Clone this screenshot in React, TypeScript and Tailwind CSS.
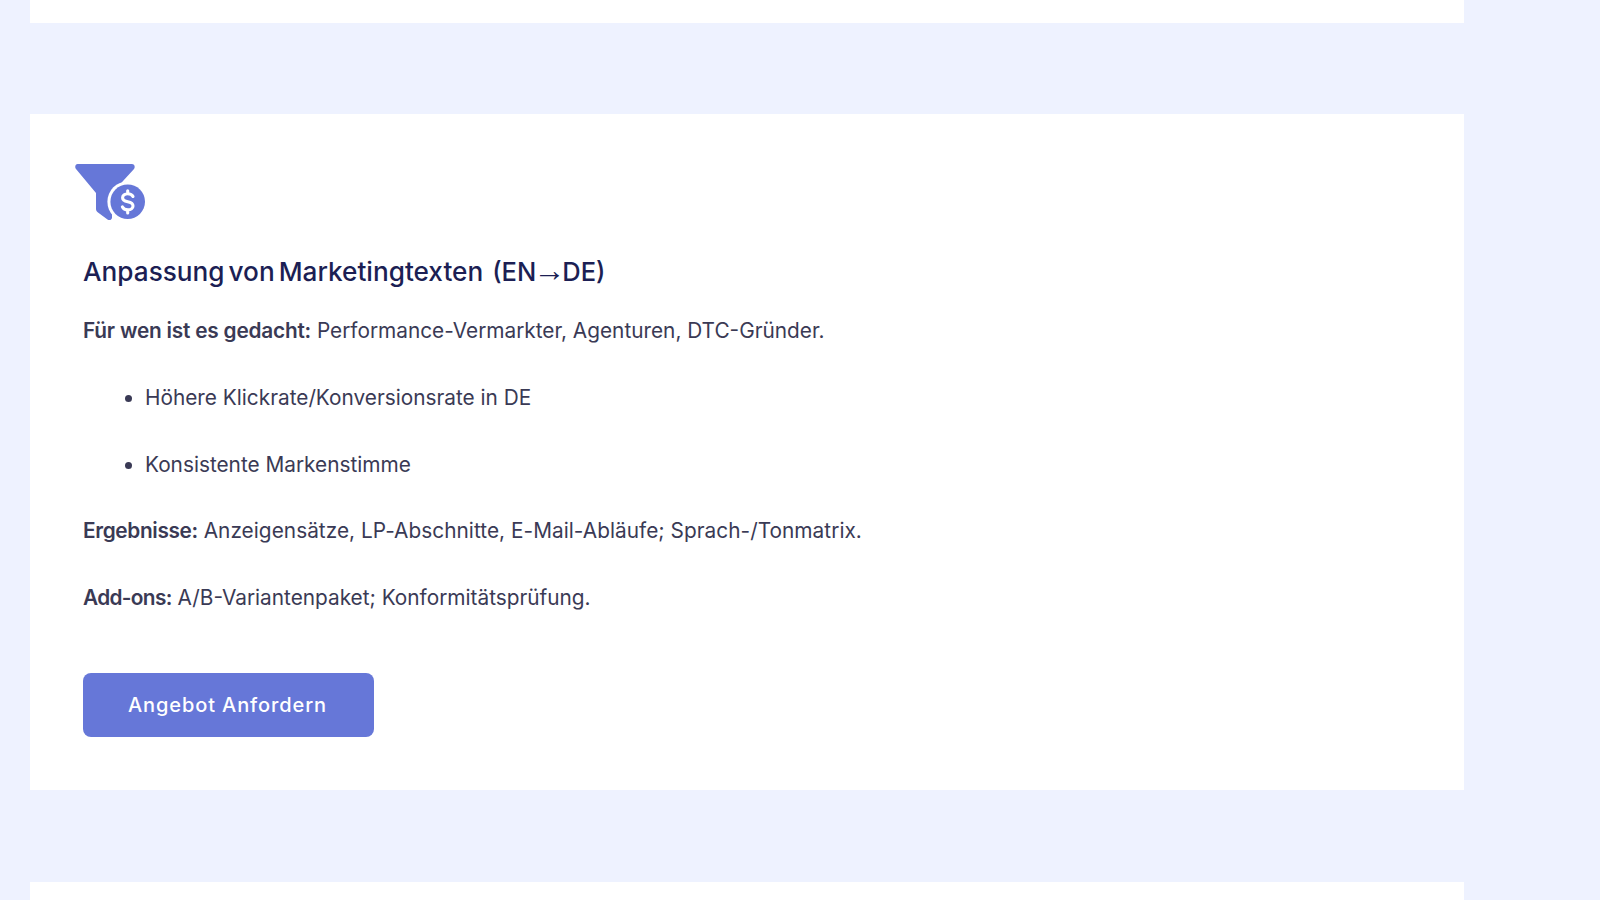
const FUNNEL_COLOR = "#6677d8";

function FunnelIcon() {
  return (
    <svg viewBox="74 163 72 60" className="block h-[60px] w-[72px]" aria-hidden="true">
      <path
        d="M77.5 164 H132 C134.5 164 135.5 167 134 169 L112 193 V218 C111 220.5 109 220.5 107.5 219.5 L98 212.5 C96.8 211.6 96 210.5 96 209 V193 L76 169 C74.5 167 75.5 164 77.5 164 Z"
        fill={FUNNEL_COLOR}
      />
      <circle cx="127.7" cy="201.7" r="20.3" fill="white" />
      <circle cx="127.7" cy="201.7" r="17.3" fill={FUNNEL_COLOR} />
      <path
        d="M133 196.5 C132 194.5 130 193.7 127.7 193.7 C124.5 193.7 122.6 195.5 122.6 197.8 C122.6 200.3 124.8 201.2 127.7 201.8 C130.6 202.4 133 203.4 133 205.9 C133 208.3 130.8 209.8 127.9 209.8 C125.2 209.8 123.3 208.8 122.4 206.8 M127.7 190.8 V193.7 M127.7 209.8 V213"
        fill="none"
        stroke="white"
        strokeWidth="3.1"
        strokeLinecap="round"
      />
    </svg>
  );
}

export default function App() {
  return (
    <div className="h-[900px] overflow-hidden bg-[#eef2ff] pl-[30px] pr-[136px] font-['Inter',sans-serif] text-[20.8px] leading-[27px] text-[#3a3a55]">
      <div className="h-[23px] bg-white" />

      <div className="mt-[91px] h-[676px] bg-white px-[53px] pt-[49px]">
        <div className="-ml-[9px]">
          <FunnelIcon />
        </div>

        <h3 className="mt-[29px] text-[26.2px] leading-[40px] font-medium [word-spacing:-3px] text-[#1c1f54]">
          Anpassung von Marketingtexten{" "}
          <span className="ml-[5px] text-[25.5px]">
            (EN
            <span className="-mx-[3px] font-['Liberation_Sans',sans-serif] text-[32px] leading-none font-normal">→</span>
            DE)
          </span>
        </h3>

        <p className="mt-[25px]">
          <strong className="font-semibold tracking-[-0.2px]">Für wen ist es gedacht:</strong>{" "}
          Performance-Vermarkter, Agenturen, DTC-Gründer.
        </p>

        <ul className="mt-[40px] list-disc pl-[62px]">
          <li>Höhere Klickrate/Konversionsrate in DE</li>
          <li className="mt-[40px]">Konsistente Markenstimme</li>
        </ul>

        <p className="mt-[39px] tracking-[0.04px]">
          <strong className="font-semibold tracking-[-0.35px]">Ergebnisse:</strong> Anzeigensätze,
          LP-Abschnitte, E-Mail-Abläufe; Sprach-/Tonmatrix.
        </p>

        <p className="mt-[40px]">
          <strong className="font-semibold tracking-[-0.65px]">Add-ons:</strong> A/B-Variantenpaket;
          Konformitätsprüfung.
        </p>

        <button className="mt-[62px] h-[64px] w-[291px] rounded-[8px] bg-[#6677d8] pr-[2px] text-[20px] font-[450] tracking-[0.9px] text-white">
          Angebot Anfordern
        </button>
      </div>

      <div className="mt-[92px] h-[40px] bg-white" />
    </div>
  );
}
